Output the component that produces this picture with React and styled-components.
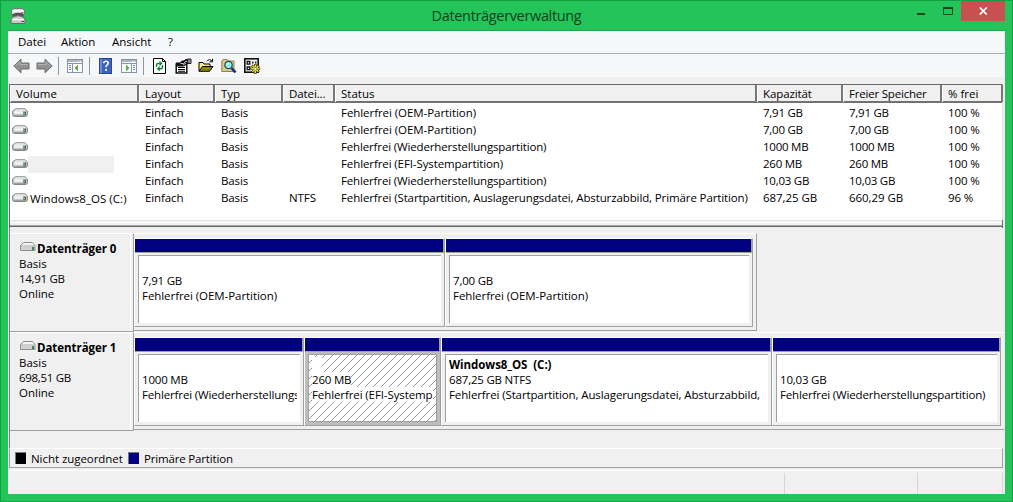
import React from "react";
import styled, { createGlobalStyle, css } from "styled-components";

const Global = createGlobalStyle`
  *{box-sizing:border-box}
  html,body{margin:0;padding:0;overflow:hidden}
  body{font-family:"Open Sans","Noto Sans",sans-serif;font-size:11.5px;line-height:15px;letter-spacing:-0.1px;color:#000}
  svg{display:block;flex:none}
`;

const Window = styled.div`
  width:1013px;height:502px;background:#23c55a;
  border:1px solid #159d45;border-bottom-color:#1aa74b;
  padding:0 7px 7px;display:flex;flex-direction:column;
`;
const TitleBar = styled.header`
  height:30px;flex:none;display:grid;grid-template-columns:1fr auto 1fr;border-bottom:1px solid #1aa84b;
`;
const AppIcon = styled.div`padding:6px 0 0 2px;`;
const Title = styled.h1`
  margin:0;font-size:14.5px;font-weight:400;line-height:30px;letter-spacing:-0.34px;color:#08421c;
`;
const Controls = styled.div`display:flex;justify-content:flex-end;align-items:flex-start;`;
const Control = styled.button`
  border:0;padding:0;background:${p => (p.$close ? "#c75050" : "transparent")};
  width:${p => (p.$close ? 44 : 27)}px;height:20px;display:flex;align-items:center;justify-content:center;
`;
const Client = styled.main`
  flex:1;min-height:0;background:#f0f0f0;display:flex;flex-direction:column;
`;
const Menu = styled.nav`
  height:23px;flex:none;background:#f5f7f9;border-bottom:1px solid #a9adb0;
  display:flex;align-items:center;padding:0 0 2px 10px;
`;
const MenuItem = styled.span`width:${p => p.$w}px;letter-spacing:0;`;
const Toolbar = styled.div`
  height:23px;flex:none;background:#f5f7f9;display:flex;align-items:center;padding-left:5px;
`;
const Tool = styled.span`width:${p => p.$w || 23}px;display:flex;flex:none;`;
const Divider = styled.i`width:1px;height:18px;background:#92969a;margin-right:${p => p.$r}px;`;

const Panel = styled.section`
  margin:7px 2px 0 1px;border:1px solid #696969;border-bottom:0;border-right-color:#e3e3e3;background:#fff;flex:none;height:136px;
`;
const columns = css`display:grid;grid-template-columns:129px 76px 68px 52px 422px 86px 99px 61px;`;
const HeadRow = styled.div`
  ${columns} height:18px;background:#f0f0f0;border-bottom:2px solid #727272;
`;
const HeadCell = styled.div`
  border-left:1px solid #fff;border-right:2px solid #777;padding-left:5px;line-height:18px;height:17px;overflow:hidden;white-space:nowrap;
  letter-spacing:${p => p.$ls || 0}px;
`;
const Rows = styled.div`padding-top:1px;`;
const Row = styled.div`${columns} height:17px;line-height:18px;white-space:nowrap;`;
const Cell = styled.div`padding-left:6px;letter-spacing:${p => p.$ls ?? -0.1}px;`;
const NumCell = styled(Cell)`letter-spacing:${p => (p.children.length > 8 ? -0.05 : -0.25)}px;`;
const VolumeCell = styled.div`display:flex;padding-left:2px;align-items:center;letter-spacing:0.05px;`;
const VolumeName = styled.span`
  padding-left:2px;height:17px;${p => p.$focus && css`width:86px;background:#f0f0f0;`}
`;
const Splitter = styled.div`
  margin:0 2px 0 1px;height:8px;flex:none;background:linear-gradient(#e6e6e6 0 1px,#f0f0f0 1px 2px,#fff 2px 3px,#f0f0f0 3px 5px,#a8a8a8 5px 6px,#696969 6px 7px,#f0f0f0 7px 8px);
  border-left:1px solid #696969;border-right:1px solid #696969;
`;
const Disks = styled.section`
  margin:0 2px 0 1px;border-left:1px solid #808080;flex:none;height:220px;padding-top:5px;
`;
const Disk = styled.div`height:99px;display:flex;`;
const DiskInfo = styled.div`
  width:124px;height:99px;flex:none;padding:7px 0 0 9px;border-bottom:1px solid #a0a0a0;border-top:1px solid #fff;
  border-right:1px solid #a0a0a0;box-shadow:inset -2px 0 0 #f0f0f0,inset -3px 0 0 #fff;
`;
const DiskName = styled.div`display:flex;font-weight:700;height:15px;letter-spacing:-0.05px;`;
const DiskLine = styled.div`height:15px;letter-spacing:${p => p.$ls || 0}px;`;
const DiskMap = styled.div`
  display:flex;align-items:flex-start;height:98px;padding:4px 3px 0 0;border-top:1px solid #fff;
  border-bottom:1px solid #a0a0a0;border-right:1px solid ${p => (p.$open ? "transparent" : "#a0a0a0")};
`;
const Part = styled.div`
  width:${p => p.$w}px;height:89px;flex:none;border-left:1px solid #fff;border-right:1px solid #a0a0a0;border-bottom:1px solid #a0a0a0;
  border-top:1px solid #fff;
  display:flex;flex-direction:column;background:${p => (p.$sel ? "#bdbdbd" : "#f0f0f0")};
`;
const PartBar = styled.div`
  height:14px;flex:none;background:#000080;border-bottom:1px solid #a0a0a0;border-right:1px solid #a0a0a0;
`;
const PartBox = styled.div`
  flex:1;margin:2px 3px 3px;padding:2px 3px 0 3px;background:#fff;border-left:1px solid #a0a0a0;border-top:1px solid #a0a0a0;
  ${p => p.$sel && css`
    border:1px solid #a0a0a0;padding-right:1px;
    background:linear-gradient(135deg,#fff 0 calc(50% - .6px),#989898 50%,#fff calc(50% + .6px)) 0 0/8px 8px;
  `}
`;
const PartLine = styled.div`
  height:15px;overflow:hidden;white-space:nowrap;letter-spacing:${p => p.$ls ?? -0.1}px;font-weight:${p => (p.$b ? 700 : 400)};
  ${p => p.$sel && css`background:#fff;width:max-content;max-width:100%;min-width:10px;`}
`;
const Legend = styled.footer`
  margin:0 2px 0 1px;height:20px;flex:none;border:1px solid #a0a0a0;border-top-color:#fff;display:flex;align-items:center;padding-left:5px;
`;
const Swatch = styled.i`width:11px;height:12px;background:${p => p.$c};border:1px solid #777;border-width:1px 0 0 1px;margin-right:5px;`;
const LegendText = styled.span`width:${p => p.$w}px;letter-spacing:${p => p.$ls}px;white-space:nowrap;`;
const Status = styled.div`
  flex:1;margin-top:2px;border-top:1px solid #fff;display:grid;grid-template-columns:777px 133px 85px;
`;
const StatusCell = styled.div`border-right:1px solid #d5d5d5;margin-top:2px;`;

const Drive = () => (
  <svg width="16" height="10" viewBox="0 0 16 10">
    <path d="M3.500.8h9.500l2.400 2.200v3.800q0 1.700-2 1.700H2.600Q.6 8.500.6 6.800V3z" fill="#c9c9c9" stroke="#858585" />
    <path d="M3.700 1.300h9l1.700 1.700H2z" fill="#e6e6e6" />
    <rect x="2" y="3.300" width="9" height="2.400" rx="1" fill="#f5f5f5" />
    <path d="M2 7.500h11" stroke="#a0a0a0" />
    <rect x="11.500" y="3.700" width="2.500" height="3.600" fill="#57645a" />
    <rect x="12" y="4.500" width="1" height="2" fill="#5fbf74" />
  </svg>
);
const DiskIcon = () => (
  <svg width="18" height="12" viewBox="0 0 18 12">
    <path d="M4.500 1.500h9l2.500 3v5h-14.500v-5z" fill="#ddd" stroke="#8c8c8c" />
    <path d="M4.800 2h8.400l2 2.500h-12.500z" fill="#f4f4f4" />
    <path d="M2 5h13.500" stroke="#b5b5b5" />
    <rect x="2.500" y="5.500" width="10" height="3" fill="#cfcfcf" />
    <rect x="13" y="6" width="2" height="3" fill="#45845a" />
  </svg>
);
const AppLogo = () => (
  <svg width="17" height="18" viewBox="0 0 17 18">
    <path d="M3.500 1.500h9.500l1.500 2.500v3.500h-13v-3.500z" fill="#dcd9dc" stroke="#77787a" />
    <path d="M2.500 4h11" stroke="#fff" strokeWidth="1.500" />
    <path d="M3 7q5-2.500 10 0l1 2.500H2z" fill="#574d5b" />
    <path d="M4 9.500q4-1.700 8 0l3 2.500v4.500H1v-4.500z" fill="#c8c5c8" stroke="#6b696c" />
    <path d="M2.500 12.500h11" stroke="#fff" strokeWidth="1.500" />
    <path d="M11.500 14.500h2.500M11 6h2.500" stroke="#444" />
  </svg>
);
const Arrow = ({ right }) => (
  <svg width="17" height="16" viewBox="0 0 17 16">
    <g transform={right ? "translate(17 0) scale(-1 1)" : undefined}>
      <path d="M.8 8L8 1.200V5h8v6H8v3.800z" fill="#929292" stroke="#6c6c6c" />
      <path d="M2.500 8L7 3.700V6.500h8" fill="none" stroke="#b4b4b4" />
    </g>
  </svg>
);
const ConsoleIcon = ({ flip }) => (
  <svg width="17" height="14" viewBox="0 0 17 14" shapeRendering="crispEdges">
    <rect x=".5" y=".5" width="15" height="13" fill="#f7f9fb" stroke="#8995a6" />
    <rect x="1" y="1" width="14" height="2" fill="#a9b5c7" />
    <path d="M11 2h1M13 2h1" stroke="#fff" />
    <path d="M1 4.500h14" stroke="#8995a6" />
    <g transform={flip ? "translate(16 0) scale(-1 1)" : undefined}>
      <path d="M5.500 5v8" stroke="#8995a6" />
      <path d="M2 6.500h2M2 8.500h2M2 10.500h2" stroke="#6f86ab" />
      <path d="M11 6v6L7 9z" fill="#63b04f" />
    </g>
  </svg>
);
const HelpIcon = () => (
  <svg width="13" height="16" viewBox="0 0 13 16">
    <rect x=".5" y=".5" width="12" height="15" fill="#3f62bd" stroke="#29479a" />
    <path d="M1 1h2v14H1z" fill="#6f8dd6" />
    <path d="M4.700 5.200Q4.800 3.200 7 3.200t2.200 1.900q0 1.200-1.200 2-1 .7-1 2.200" fill="none" stroke="#fff" strokeWidth="1.600" />
    <rect x="6.100" y="11" width="1.800" height="1.800" fill="#fff" />
  </svg>
);
const RefreshIcon = () => (
  <svg width="14" height="16" viewBox="0 0 14 16">
    <path d="M.5.5h9l3 3v12H.5z" fill="#fff" stroke="#000" />
    <path d="M9.500.5v3h3" fill="none" stroke="#000" />
    <path d="M3.500 9V7Q3.500 5.500 5 5.500h2M9.500 7v2q0 1.800-1.500 1.800H6" fill="none" stroke="#168033" strokeWidth="1.400" />
    <path d="M6.500 2.800l3 2.700-3 2.700zM6.700 8l-3 2.800 3 2.700z" fill="#168033" />
  </svg>
);
const PropertiesIcon = () => (
  <svg width="17" height="16" viewBox="0 0 17 16">
    <rect x="1.200" y="6" width="10.600" height="9" fill="#fff" stroke="#000" strokeWidth="1.400" />
    <path d="M3 9.500h7M3 11.500h7M3 13.300h7" stroke="#000" strokeWidth="1.100" />
    <path d="M1 4.500h4l2-2h2l2-1.500h4.500v5H12L9 8.500H1z" fill="#111" />
    <path d="M5.500 5.500h3l2-2h2M8 7l3-2" stroke="#ccc" fill="none" />
    <path d="M12.500 1h3.500v4.500h-3z" fill="#8f8ea8" stroke="#222" />
  </svg>
);
const FolderIcon = () => (
  <svg width="17" height="15" viewBox="0 0 17 15">
    <path d="M1 13V4.500h4l1 1.500h6v3" fill="#f6ee80" stroke="#000" />
    <path d="M1 13.300L4.500 8.500H15L11.500 13.300z" fill="#8b8514" stroke="#000" />
    <path d="M9 3.300q2.500-3.500 5 0M14.500 .8v3h-3" fill="none" stroke="#000" />
  </svg>
);
const FindIcon = () => (
  <svg width="17" height="16" viewBox="0 0 17 16">
    <path d="M.8 13.500V3L2 1.500h4L7.500 3H13v10.500z" fill="#dccb86" stroke="#8c8155" />
    <circle cx="7.500" cy="7" r="3.700" fill="#8deff0" stroke="#25474b" strokeWidth="1.200" />
    <path d="M5.500 6.500L8 4.700" stroke="#fff" />
    <path d="M10.500 10L14.500 14.500" stroke="#102b99" strokeWidth="2.600" />
  </svg>
);
const SettingsIcon = () => (
  <svg width="17" height="16" viewBox="0 0 17 16">
    <rect x=".8" y=".8" width="13.400" height="13.400" fill="#f4f4f4" stroke="#111" strokeWidth="1.600" />
    <path d="M3.200 3.500h2.600v2.600H3.200zM3.200 9h2.600v2.600H3.200z" fill="#fff" stroke="#111" strokeWidth="1.300" />
    <path d="M8 3.500h1.500v2H8zM11 3.500h1.500v2H11z" fill="#222" />
    <path d="M11.300 6v9.700M6.500 10.800h9.700M7.900 7.400l6.900 6.900M14.800 7.400l-6.900 6.900" stroke="#2b2900" strokeWidth="2.600" />
    <path d="M11.300 6.600v8.500M7.100 10.800h8.500M8.400 7.900l5.900 5.900M14.300 7.900l-5.900 5.900" stroke="#eadf28" strokeWidth="1.500" />
    <circle cx="11.300" cy="10.800" r="1.400" fill="#fff" stroke="#444" strokeWidth=".6" />
  </svg>
);

const OEM = "Fehlerfrei (OEM-Partition)";
const RECOVERY = "Fehlerfrei (Wiederherstellungspartition)";
const volumes = [
  { status: OEM, ls: -0.06, cap: "7,91 GB", free: "7,91 GB", pct: "100 %" },
  { status: OEM, ls: -0.06, cap: "7,00 GB", free: "7,00 GB", pct: "100 %" },
  { status: RECOVERY, ls: -0.15, cap: "1000 MB", free: "1000 MB", pct: "100 %" },
  { status: "Fehlerfrei (EFI-Systempartition)", cap: "260 MB", free: "260 MB", pct: "100 %", focus: true },
  { status: RECOVERY, ls: -0.15, cap: "10,03 GB", free: "10,03 GB", pct: "100 %" },
  { name: "Windows8_OS (C:)", fs: "NTFS", status: "Fehlerfrei (Startpartition, Auslagerungsdatei, Absturzabbild, Primäre Partition)", ls: -0.115, cap: "687,25 GB", free: "660,29 GB", pct: "96 %" },
];
const disks = [
  { name: "Datenträger 0", size: "14,91 GB", parts: [
    { w: 311, size: "7,91 GB", status: OEM, ls: -0.06 },
    { w: 308, size: "7,00 GB", status: OEM, ls: -0.06 },
  ] },
  { name: "Datenträger 1", size: "698,51 GB", open: true, parts: [
    { w: 170, size: "1000 MB", status: "Fehlerfrei (Wiederherstellungs", ls: -0.15 },
    { w: 137, size: "260 MB", status: "Fehlerfrei (EFI-Systemp", ls: -0.1, sel: true },
    { w: 331, name: "Windows8_OS\u00a0 (C:)", size: "687,25 GB NTFS", status: "Fehlerfrei (Startpartition, Auslagerungsdatei, Absturzabbild,", ls: -0.115 },
    { w: 229, size: "10,03 GB", status: RECOVERY, ls: -0.15 },
  ] },
];
const heads = [
  ["Volume", 0], ["Layout", 0], ["Typ", 0], ["Datei...", -0.1], ["Status", 0],
  ["Kapazität", -0.1], ["Freier Speicher", -0.2], ["% frei", 0],
];

export default function App() {
  return (
    <>
      <Global />
      <Window>
        <TitleBar>
          <AppIcon><AppLogo /></AppIcon>
          <Title>Datenträgerverwaltung</Title>
          <Controls>
            <Control aria-label="Minimieren"><svg width="9" height="12" viewBox="0 0 9 12"><path d="M1 9h8" stroke="#0a4a20" strokeWidth="2" /></svg></Control>
            <Control aria-label="Maximieren"><svg width="11" height="10" viewBox="0 0 11 10"><path d="M1.500 2h9v6.500h-9z" fill="none" stroke="#0a4a20" /><path d="M1 2h10" stroke="#0a4a20" strokeWidth="2" /></svg></Control>
            <Control $close aria-label="Schließen"><svg width="9" height="8" viewBox="0 0 9 8"><path d="M.8.500l7 7M7.800.500l-7 7" stroke="#fff" strokeWidth="1.700" /></svg></Control>
          </Controls>
        </TitleBar>
        <Client>
          <Menu>
            <MenuItem $w={43}>Datei</MenuItem>
            <MenuItem $w={51}>Aktion</MenuItem>
            <MenuItem $w={56}>Ansicht</MenuItem>
            <MenuItem $w={10}>?</MenuItem>
          </Menu>
          <Toolbar>
            <Tool><Arrow /></Tool>
            <Tool $w={22}><Arrow right /></Tool>
            <Divider $r={8} />
            <Tool $w={22}><ConsoleIcon /></Tool>
            <Divider $r={9} />
            <Tool $w={22}><HelpIcon /></Tool>
            <Tool $w={22}><ConsoleIcon flip /></Tool>
            <Divider $r={9} />
            <Tool $w={22}><RefreshIcon /></Tool>
            <Tool><PropertiesIcon /></Tool>
            <Tool><FolderIcon /></Tool>
            <Tool><FindIcon /></Tool>
            <Tool><SettingsIcon /></Tool>
          </Toolbar>
          <Panel>
            <HeadRow>{heads.map(([h, ls]) => <HeadCell key={h} $ls={ls}>{h}</HeadCell>)}</HeadRow>
            <Rows>
              {volumes.map((v, i) => (
                <Row key={i}>
                  <VolumeCell><Drive /><VolumeName $focus={v.focus}>{v.name}</VolumeName></VolumeCell>
                  <Cell>Einfach</Cell>
                  <Cell>Basis</Cell>
                  <Cell>{v.fs}</Cell>
                  <Cell $ls={v.ls}>{v.status}</Cell>
                  <NumCell>{v.cap}</NumCell>
                  <NumCell>{v.free}</NumCell>
                  <Cell>{v.pct}</Cell>
                </Row>
              ))}
            </Rows>
          </Panel>
          <Splitter />
          <Disks>
            {disks.map(d => (
              <Disk key={d.name}>
                <DiskInfo>
                  <DiskName><DiskIcon />{d.name}</DiskName>
                  <DiskLine>Basis</DiskLine>
                  <DiskLine $ls={-0.3}>{d.size}</DiskLine>
                  <DiskLine>Online</DiskLine>
                </DiskInfo>
                <DiskMap $open={d.open}>
                  {d.parts.map((p, i) => (
                    <Part key={i} $w={p.w} $sel={p.sel}>
                      <PartBar />
                      <PartBox $sel={p.sel}>
                        <PartLine $b $ls={-0.05} $sel={p.sel}>{p.name}</PartLine>
                        <PartLine $ls={-0.2} $sel={p.sel}>{p.size}</PartLine>
                        <PartLine $ls={p.ls} $sel={p.sel}>{p.status}</PartLine>
                      </PartBox>
                    </Part>
                  ))}
                </DiskMap>
              </Disk>
            ))}
          </Disks>
          <Legend>
            <Swatch $c="#000" /><LegendText $w={97} $ls={-0.05}>Nicht zugeordnet</LegendText>
            <Swatch $c="#000080" /><LegendText $w={100} $ls={-0.17}>Primäre Partition</LegendText>
          </Legend>
          <Status><StatusCell /><StatusCell /><StatusCell /></Status>
        </Client>
      </Window>
    </>
  );
}
